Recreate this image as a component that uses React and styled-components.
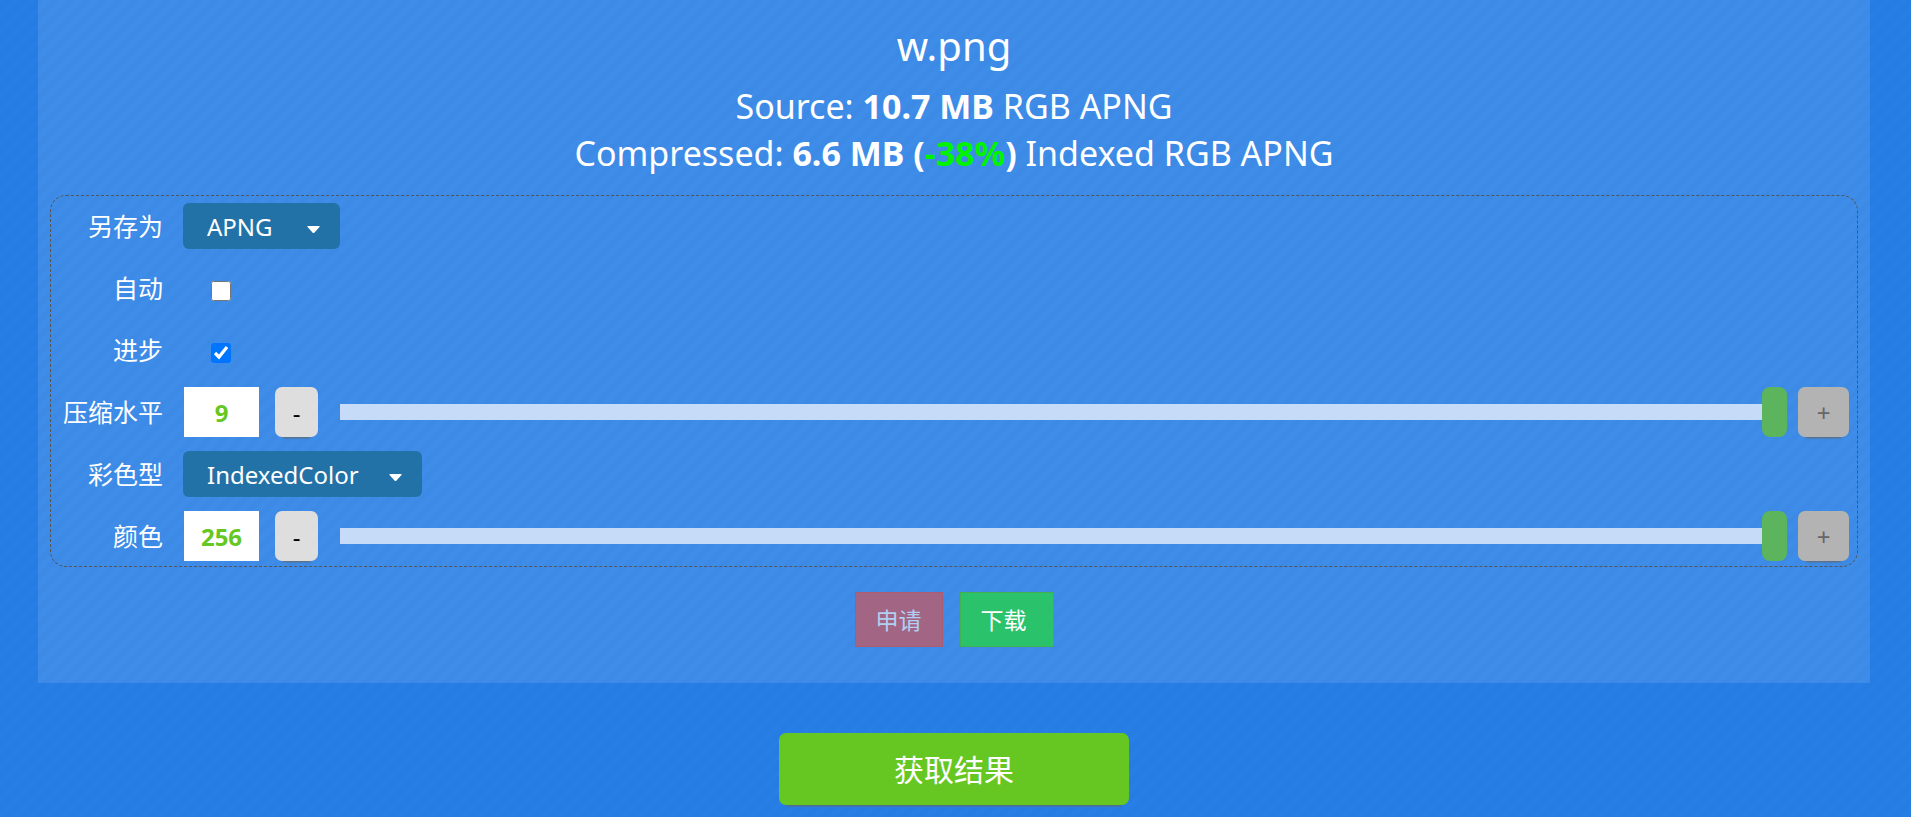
import React, { useState } from "react";
import styled, { createGlobalStyle } from "styled-components";

const GlobalStyle = createGlobalStyle`
  * { box-sizing: border-box; }
  body {
    margin: 0;
    min-height: 100vh;
    color: #fff;
    font-family: "Noto Sans", "Noto Sans CJK SC", sans-serif;
    background-color: #277fe7;
    background-image: linear-gradient(
      135deg,
      rgba(0, 50, 120, 0) 0%,
      rgba(0, 50, 120, 0.05) 25%,
      rgba(0, 50, 120, 0) 50%,
      rgba(0, 50, 120, 0.05) 75%,
      rgba(0, 50, 120, 0) 100%
    );
    background-size: 16px 16px;
  }
  button, input, select { font-family: inherit; margin: 0; }
`;

const Page = styled.main`
  padding: 0 41px 12px 38px;
  display: flex;
  flex-direction: column;
  align-items: center;
  gap: 50px;
`;

const Panel = styled.section`
  width: 100%;
  padding: 16px 12px 36px;
  background: rgba(255, 255, 255, 0.11);
  display: flex;
  flex-direction: column;
`;

const FileName = styled.h1`
  margin: 0 0 7px;
  font-size: 40px;
  line-height: 60px;
  font-weight: 400;
  text-align: center;
`;

const Summary = styled.p`
  margin: 0;
  font-size: 34px;
  line-height: 47px;
  text-align: center;
`;

const Saving = styled.span`
  color: #00f400;
`;

const Options = styled.div`
  margin-top: 18px;
  padding: 5px 8px 5px 0;
  border: 1px dashed #555;
  border-radius: 16px;
  display: flex;
  flex-direction: column;
  gap: 12px;
`;

const Row = styled.div`
  height: 50px;
  display: grid;
  grid-template-columns: 112px 1fr;
  column-gap: 20px;
  align-items: center;
`;

const Label = styled.label`
  font-size: 25px;
  line-height: 36px;
  text-align: right;
  white-space: nowrap;
`;

const SelectBox = styled.span`
  position: relative;
  justify-self: start;
  display: flex;
`;

const Select = styled.select`
  appearance: none;
  width: ${(p) => p.$width}px;
  height: 46px;
  padding: 0 24px;
  border: 0;
  border-radius: 6px;
  background: #2272a8;
  color: #fff;
  font-size: 24px;
`;

const Caret = styled.svg`
  position: absolute;
  right: 20px;
  top: 22px;
  width: 13px;
  height: 9px;
  pointer-events: none;
`;

const Tick = styled.input`
  justify-self: start;
  width: 20px;
  height: 20px;
  margin: 5px 0 0 28px;
  accent-color: #0075ff;
`;

const Stepper = styled.div`
  padding-left: 1px;
  display: flex;
  align-items: center;
`;

const NumberField = styled.input`
  width: 75px;
  height: 50px;
  margin-right: 16px;
  padding: 0;
  border: 0;
  background: #fff;
  color: #66c723;
  font-size: 24px;
  font-weight: 700;
  text-align: center;
`;

const StepButton = styled.button`
  width: ${(p) => p.$width}px;
  height: 50px;
  padding: 0;
  border: 0;
  border-radius: 7px;
  background: #dedede;
  color: #000;
  font-size: 24px;
  box-shadow: 0 9px 2px -8px #666;
  &:disabled { background: #b3b3b3; color: #666; }
`;

const Slider = styled.input`
  appearance: none;
  flex: 1;
  min-width: 0;
  height: 50px;
  margin: 0 11px 0 22px;
  background: transparent;
  &::-webkit-slider-runnable-track {
    height: 16px;
    background: #c5dbf7;
  }
  &::-webkit-slider-thumb {
    appearance: none;
    width: 25px;
    height: 50px;
    margin-top: -17px;
    border-radius: 8px;
    background: #5cb55c;
  }
`;

const Actions = styled.div`
  margin-top: 25px;
  display: flex;
  justify-content: center;
  gap: 17px;
`;

const ActionButton = styled.button`
  height: 55px;
  padding: ${(p) => (p.$primary ? "0 26px 2px 20px" : "0 20px 2px")};
  border: 1px solid ${(p) => (p.$primary ? "#42b04e" : "#ac5b70")};
  background: ${(p) => (p.$primary ? "#2ac26b" : "#a26684")};
  color: ${(p) => (p.$primary ? "#fff" : "#b1cff3")};
  font-size: 23px;
`;

const ResultButton = styled.button`
  width: 350px;
  height: 72px;
  padding: 0 0 2px;
  border: 0;
  border-radius: 7px;
  background: #66c723;
  color: #fff;
  font-size: 30px;
  box-shadow: 0 9px 2px -8px #666;
`;

function SelectRow({ id, label, width, options }) {
  return (
    <Row>
      <Label htmlFor={id}>{label}</Label>
      <SelectBox>
        <Select id={id} $width={width} defaultValue={options[0]}>
          {options.map((o) => (
            <option key={o}>{o}</option>
          ))}
        </Select>
        <Caret viewBox="0 0 13 9" aria-hidden="true">
          <path d="M1 1h11q1 0 .5 1L7.5 7.5q-1 1-2 0L.5 2Q0 1 1 1z" fill="#fff" />
        </Caret>
      </SelectBox>
    </Row>
  );
}

function CheckRow({ id, label, checked }) {
  return (
    <Row>
      <Label htmlFor={id}>{label}</Label>
      <Tick id={id} type="checkbox" defaultChecked={checked} />
    </Row>
  );
}

function RangeRow({ id, label, min, max }) {
  const [value, setValue] = useState(max);
  const update = (v) => setValue(Math.min(max, Math.max(min, Number(v) || min)));
  return (
    <Row>
      <Label htmlFor={id}>{label}</Label>
      <Stepper>
        <NumberField id={id} inputMode="numeric" value={value} onChange={(e) => update(e.target.value)} />
        <StepButton type="button" $width={43} disabled={value <= min} onClick={() => update(value - 1)}>
          -
        </StepButton>
        <Slider
          type="range"
          aria-label={label}
          min={min}
          max={max}
          value={value}
          onChange={(e) => update(e.target.value)}
        />
        <StepButton type="button" $width={51} disabled={value >= max} onClick={() => update(value + 1)}>
          +
        </StepButton>
      </Stepper>
    </Row>
  );
}

export default function App() {
  return (
    <>
      <GlobalStyle />
      <Page>
        <Panel>
          <FileName>w.png</FileName>
          <Summary>
            Source: <b>10.7 MB</b> RGB APNG
          </Summary>
          <Summary>
            Compressed: <b>6.6 MB (<Saving>-38%</Saving>)</b> Indexed RGB APNG
          </Summary>
          <Options>
            <SelectRow id="format" label="另存为" width={157} options={["APNG"]} />
            <CheckRow id="auto" label="自动" />
            <CheckRow id="progressive" label="进步" checked />
            <RangeRow id="level" label="压缩水平" min={0} max={9} />
            <SelectRow id="color-type" label="彩色型" width={239} options={["IndexedColor"]} />
            <RangeRow id="colors" label="颜色" min={2} max={256} />
          </Options>
          <Actions>
            <ActionButton type="button" disabled>申请</ActionButton>
            <ActionButton type="button" $primary>下载</ActionButton>
          </Actions>
        </Panel>
        <ResultButton type="button">获取结果</ResultButton>
      </Page>
    </>
  );
}
